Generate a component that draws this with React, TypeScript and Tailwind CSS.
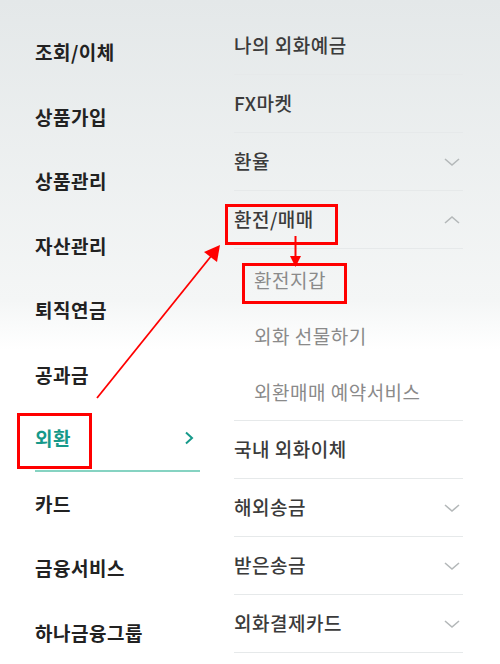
import React from 'react';

const FONT = { fontFamily: '"Noto Sans CJK KR", "Noto Sans", sans-serif' };

const leftMenu = ['조회/이체', '상품가입', '상품관리', '자산관리', '퇴직연금', '공과금', '외환', '카드', '금융서비스', '하나금융그룹'];

type Row = { label: string; chevron?: 'down' | 'up' };

const topRows: Row[] = [
    { label: '나의 외화예금' },
    { label: 'FX마켓' },
    { label: '환율', chevron: 'down' },
    { label: '환전/매매', chevron: 'up' },
];

const subRows = ['환전지갑', '외화 선물하기', '외환매매 예약서비스'];

const bottomRows: Row[] = [
    { label: '국내 외화이체' },
    { label: '해외송금', chevron: 'down' },
    { label: '받은송금', chevron: 'down' },
    { label: '외화결제카드', chevron: 'down' },
];

const Chevron = ({ dir }: { dir: 'down' | 'up' }) => (
    <svg width="18" height="10" viewBox="0 0 18 10" className="mr-[2px]">
        <path
            d={dir === 'down' ? 'M2 2 L9 8 L16 2' : 'M2 8 L9 2 L16 8'}
            fill="none"
            stroke="#b4b8b9"
            strokeWidth="1.6"
        />
    </svg>
);

const MenuRow = ({ row }: { row: Row }) => (
    <div className="h-[58px] flex items-center justify-between border-b border-[#e6e9ea]">
        <span className="text-[19px] font-medium text-[#3b3b3b] tracking-[0.5px]">{row.label}</span>
        {row.chevron && <Chevron dir={row.chevron} />}
    </div>
);

export default function App() {
    return (
        <div
            className="relative w-[500px] h-[664px] overflow-hidden bg-[linear-gradient(to_bottom,#e4e8e9_0px,#f4f6f6_300px,#ffffff_350px)]"
            style={FONT}
        >
            <div className="flex">
                {/* left category column */}
                <div className="w-[200px] pl-[35px] pt-[20px] shrink-0">
                    {leftMenu.map((m) => {
                        const active = m === '외환';
                        return (
                            <div
                                key={m}
                                className={
                                    active
                                        ? 'h-[64.5px] flex items-center justify-between border-b-2 border-[#86d3c2]'
                                        : 'h-[64.5px] flex items-center'
                                }
                            >
                                <span
                                    className={
                                        active
                                            ? 'text-[19px] font-bold text-[#16998a] tracking-[0.5px]'
                                            : 'text-[19px] font-bold text-[#222222] tracking-[0.5px]'
                                    }
                                >
                                    {m}
                                </span>
                                {active && (
                                    <svg width="12" height="14" viewBox="0 0 12 14" className="mr-[5px]">
                                        <path d="M3 1.5 L9 7 L3 12.5" fill="none" stroke="#16998a" strokeWidth="2" />
                                    </svg>
                                )}
                            </div>
                        );
                    })}
                </div>

                {/* right sub menu column */}
                <div className="ml-[34px] w-[229px] pt-[17px]">
                    {topRows.map((r) => (
                        <MenuRow key={r.label} row={r} />
                    ))}
                    <div className="pt-[3px] border-b border-[#e6e9ea]">
                        {subRows.map((s) => (
                            <div key={s} className="h-[56px] flex items-center pl-[20px]">
                                <span className="text-[19px] text-[#8a8a8a] tracking-[0.5px]">{s}</span>
                            </div>
                        ))}
                    </div>
                    {bottomRows.map((r) => (
                        <MenuRow key={r.label} row={r} />
                    ))}
                </div>
            </div>

            {/* red annotation boxes */}
            <div className="absolute left-[17px] top-[413px] w-[75px] h-[56px] border-[3px] border-[#ff0000]" />
            <div className="absolute left-[225px] top-[204px] w-[113px] h-[41px] border-[3px] border-[#ff0000]" />
            <div className="absolute left-[242px] top-[263px] w-[105px] h-[41px] border-[3px] border-[#ff0000]" />

            {/* red annotation arrows */}
            <svg className="absolute inset-0 pointer-events-none" width="500" height="664" viewBox="0 0 500 664">
                <line x1="97" y1="398" x2="212" y2="255" stroke="#ff0000" strokeWidth="1.8" />
                <polygon points="220,245 217,262 204,252" fill="#ff0000" />
                <line x1="295.5" y1="236" x2="295.5" y2="258" stroke="#ff0000" strokeWidth="2" />
                <polygon points="290,256 301,256 295.5,267" fill="#ff0000" />
            </svg>
        </div>
    );
}
